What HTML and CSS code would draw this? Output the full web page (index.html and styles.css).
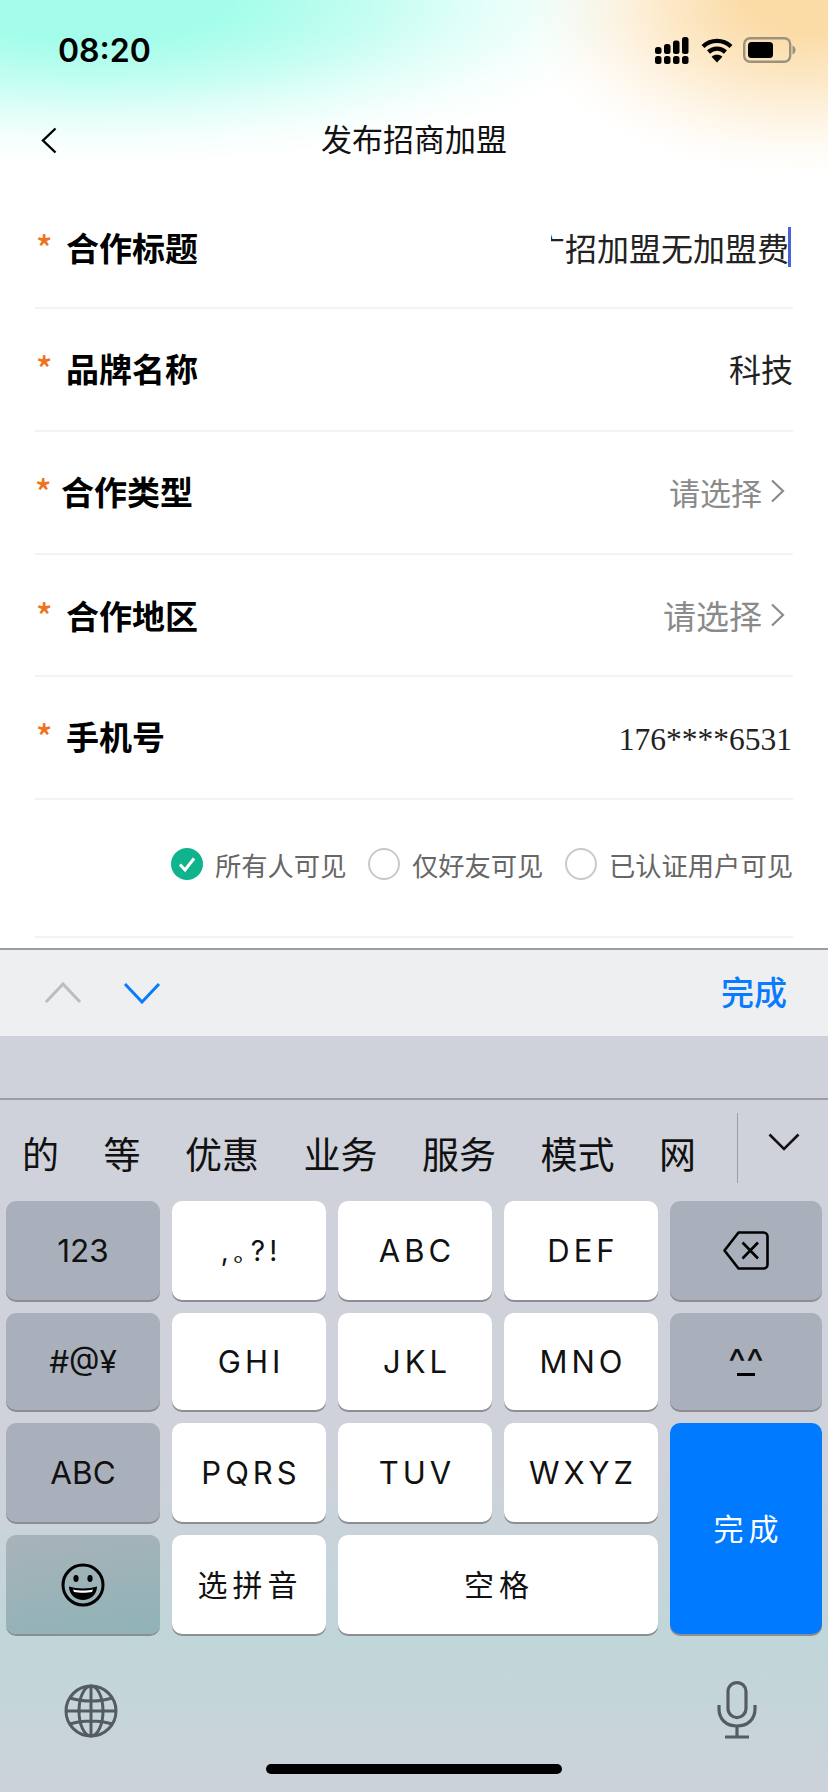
FILE: index.html
```html
<!DOCTYPE html>
<html>
<head>
    <meta charset="utf-8">
    <title>发布招商加盟</title>
    <link rel="stylesheet" href="styles.css">
</head>
<body>
    <div class="screen">
        <div class="status-bar">
            <span class="time">08:20</span>
            <div class="status-icons">
                <svg width="34" height="27" viewBox="0 0 34 27">
                    <g fill="#000">
                        <rect x="0" y="10" width="6.5" height="7" rx="2.5"/>
                        <rect x="9" y="7" width="6.5" height="10" rx="2.5"/>
                        <rect x="18" y="3.5" width="6.5" height="13.5" rx="2.5"/>
                        <rect x="27" y="0" width="6.5" height="17" rx="2.5"/>
                        <rect x="0" y="19" width="6.5" height="8" rx="2.5"/>
                        <rect x="9" y="19" width="6.5" height="8" rx="2.5"/>
                        <rect x="18" y="19" width="6.5" height="8" rx="2.5"/>
                        <rect x="27" y="19" width="6.5" height="8" rx="2.5"/>
                    </g>
                </svg>
                <svg class="wifi" width="32" height="26" viewBox="0 0 32 26">
                    <g fill="none" stroke="#000" stroke-width="4.4">
                        <path d="M2 9.5C10 2 22 2 30 9.5"/>
                        <path d="M7.5 15C12.5 10.5 19.5 10.5 24.5 15"/>
                    </g>
                    <path d="M16 25.5L10.6 19.8C13.6 17.2 18.4 17.2 21.4 19.8Z" fill="#000"/>
                </svg>
                <svg class="battery" width="53" height="26" viewBox="0 0 53 26">
                    <rect x="1.2" y="1.2" width="46" height="23.6" rx="6" fill="none" stroke="#9b917f" stroke-width="2.4"/>
                    <rect x="5" y="5" width="25" height="16" rx="3.5" fill="#000"/>
                    <path d="M49.5 8.5C51.5 9.5 52.5 11 52.5 13C52.5 15 51.5 16.5 49.5 17.5Z" fill="#9b917f"/>
                </svg>
            </div>
        </div>

        <div class="nav-bar">
            <svg class="back" width="18" height="27" viewBox="0 0 18 27">
                <path d="M15.5 1.5L3 13.5L15.5 25.5" fill="none" stroke="#000" stroke-width="2.4"/>
            </svg>
            <h1 class="nav-title">发布招商加盟</h1>
        </div>

        <form class="form">
            <div class="row row-first">
                <div class="label"><span class="star">*</span>合作标题</div>
                <div class="input-clip"><span class="value-text">广招加盟无加盟费</span><span class="cursor"></span></div>
            </div>
            <div class="row">
                <div class="label"><span class="star">*</span>品牌名称</div>
                <div class="value">科技</div>
            </div>
            <div class="row">
                <div class="label label-tight"><span class="star">*</span>合作类型</div>
                <div class="select">请选择
                    <svg width="15" height="24" viewBox="0 0 15 24"><path d="M2 1.5L13 12L2 22.5" fill="none" stroke="#8a8a8a" stroke-width="2.2"/></svg>
                </div>
            </div>
            <div class="row row-short">
                <div class="label"><span class="star">*</span>合作地区</div>
                <div class="select select-big">请选择
                    <svg width="15" height="24" viewBox="0 0 15 24"><path d="M2 1.5L13 12L2 22.5" fill="none" stroke="#8a8a8a" stroke-width="2.2"/></svg>
                </div>
            </div>
            <div class="row">
                <div class="label"><span class="star">*</span>手机号</div>
                <div class="phone">176****6531</div>
            </div>
            <div class="row row-radios">
                <div class="radio">
                    <svg width="32" height="32" viewBox="0 0 32 32">
                        <circle cx="16" cy="16" r="16" fill="#10b48c"/>
                        <path d="M9 16.5L14 22L23 10.5" fill="none" stroke="#fff" stroke-width="3"/>
                    </svg>
                    所有人可见
                </div>
                <div class="radio"><span class="circle"></span>仅好友可见</div>
                <div class="radio"><span class="circle"></span>已认证用户可见</div>
            </div>
        </form>

        <div class="toolbar">
            <svg width="38" height="22" viewBox="0 0 38 22"><path d="M2 20L19 2L36 20" fill="none" stroke="#bcbdbf" stroke-width="3"/></svg>
            <svg class="next" width="38" height="22" viewBox="0 0 38 22"><path d="M2 2L19 20L36 2" fill="none" stroke="#0a7aff" stroke-width="3"/></svg>
            <span class="done">完成</span>
        </div>

        <div class="keyboard-gap"></div>

        <div class="keyboard">
            <div class="candidates">
                <div class="candidate-list">
                    <span>的</span><span>等</span><span>优惠</span><span>业务</span><span>服务</span><span>模式</span><span>网</span>
                </div>
                <div class="candidate-more">
                    <svg width="32" height="18" viewBox="0 0 32 18"><path d="M1.5 1.5L16 16L30.5 1.5" fill="none" stroke="#111" stroke-width="2.6"/></svg>
                </div>
            </div>

            <div class="keys">
                <div class="key key-fn">123</div>
                <div class="key key-small">,｡?!</div>
                <div class="key">ABC</div>
                <div class="key">DEF</div>
                <div class="key key-fn">
                    <svg width="46" height="39" viewBox="0 0 46 39">
                        <path d="M15.5 1.5H40.5A4 4 0 0 1 44.5 5.5V33.5A4 4 0 0 1 40.5 37.5H15.5L1.5 19.5Z" fill="none" stroke="#000" stroke-width="2.6" stroke-linejoin="round"/>
                        <path d="M19.5 11.5L35 27.5M35 11.5L19.5 27.5" stroke="#000" stroke-width="2.6"/>
                    </svg>
                </div>

                <div class="key key-fn">#@¥</div>
                <div class="key">GHI</div>
                <div class="key">JKL</div>
                <div class="key">MNO</div>
                <div class="key key-fn"><span class="kaomoji">^^</span></div>

                <div class="key key-fn">ABC</div>
                <div class="key">PQRS</div>
                <div class="key">TUV</div>
                <div class="key">WXYZ</div>
                <div class="key key-done">完成</div>

                <div class="key key-fn key-emoji">
                    <svg width="44" height="44" viewBox="0 0 44 44">
                        <circle cx="22" cy="22" r="20" fill="none" stroke="#000" stroke-width="3"/>
                        <ellipse cx="15" cy="15.5" rx="2.6" ry="3.4" fill="#000"/>
                        <ellipse cx="29" cy="15.5" rx="2.6" ry="3.4" fill="#000"/>
                        <path d="M8 23.5C16 26 28 26 36 23.5C36 32 29 37 22 37C15 37 8 32 8 23.5Z" fill="#000"/>
                        <path d="M12 26.5C18 27.8 26 27.8 32 26.5L31 29C26 30 18 30 13 29Z" fill="#fff"/>
                    </svg>
                </div>
                <div class="key key-cjk">选拼音</div>
                <div class="key key-cjk key-space">空格</div>
            </div>

            <div class="keyboard-bottom">
                <svg width="54" height="54" viewBox="0 0 54 54">
                    <g fill="none" stroke="#555b63" stroke-width="3">
                        <circle cx="27" cy="27" r="25"/>
                        <ellipse cx="27" cy="27" rx="12" ry="25"/>
                        <path d="M27 2V52M2 27H52M6 14C18 18 36 18 48 14M6 40C18 36 36 36 48 40"/>
                    </g>
                </svg>
                <svg class="mic" width="40" height="58" viewBox="0 0 40 58">
                    <g fill="none" stroke="#555b63" stroke-width="3.2">
                        <rect x="11" y="1.6" width="18" height="35" rx="9"/>
                        <path d="M2 24V28C2 38 9 45 20 45C31 45 38 38 38 28V24M20 45V56M8 56H32"/>
                    </g>
                </svg>
            </div>

            <div class="home-bar"></div>
        </div>
    </div>
</body>
</html>
```

FILE: styles.css
```css
* {
    box-sizing: border-box;
}

body {
    margin: 0;
    font-family: "Noto Sans CJK SC", sans-serif;
    background-color: #fff;
}

.screen {
    width: 828px;
    height: 1792px;
    overflow: hidden;
    display: flex;
    flex-direction: column;
    background:
        radial-gradient(ellipse 560px 165px at 90px 0, #a3fdea 0, #a3fdea 25%, rgba(163, 253, 234, 0.65) 50%, rgba(163, 253, 234, 0.3) 70%, rgba(163, 253, 234, 0.1) 85%, rgba(163, 253, 234, 0) 100%),
        radial-gradient(ellipse 280px 175px at 800px 0, #fbdba6 0, #fbdba6 18%, rgba(251, 219, 166, 0.65) 45%, rgba(251, 219, 166, 0.3) 68%, rgba(251, 219, 166, 0.1) 85%, rgba(251, 219, 166, 0) 100%),
        #fff;
}

/* status bar */
.status-bar {
    height: 100px;
    flex-shrink: 0;
    display: flex;
    align-items: center;
    justify-content: space-between;
    padding: 0 32px 0 58px;
}

.time {
    font-family: Inter, sans-serif;
    font-size: 32px;
    font-weight: 600;
    color: #000;
}

.status-icons {
    display: flex;
    align-items: center;
}

.wifi {
    margin-left: 12px;
}

.battery {
    margin-left: 10px;
}

/* nav */
.nav-bar {
    height: 78px;
    flex-shrink: 0;
    display: flex;
    align-items: center;
    justify-content: center;
    padding-bottom: 4px;
    position: relative;
}

.back {
    position: absolute;
    left: 40px;
    top: 27px;
}

.nav-title {
    margin: 0;
    font-size: 31px;
    font-weight: 400;
    color: #111;
}

/* form */
.form {
    flex-shrink: 0;
    height: 770px;
    padding: 11px 35px 0 35px;
}

.row {
    height: 123px;
    display: flex;
    align-items: center;
    justify-content: space-between;
    padding-bottom: 3px;
    border-bottom: 2px solid #f3f3f3;
}

.row-first {
    height: 120px;
}

.row-short {
    height: 122px;
    padding-bottom: 1px;
}

.row-radios {
    height: 138px;
    justify-content: flex-end;
    gap: 21.5px;
}

.label {
    display: flex;
    align-items: center;
    padding-left: 1px;
    font-size: 33px;
    font-weight: 700;
    color: #000;
}

.label-tight {
    padding-left: 0;
}

.star {
    width: 30px;
    font-family: "Noto Sans CJK SC", sans-serif;
    font-size: 34px;
    font-weight: 500;
    line-height: 1;
    color: #ef7420;
}

.label-tight .star {
    width: 26px;
}

.input-clip {
    width: 240px;
    height: 42px;
    overflow: hidden;
    display: flex;
    align-items: center;
    justify-content: flex-end;
    margin-right: 2px;
}

.value-text {
    flex-shrink: 0;
    font-size: 32px;
    color: #222;
}

.cursor {
    flex-shrink: 0;
    width: 3px;
    height: 40px;
    margin-left: -1px;
    background-color: #4a64d8;
}

.value {
    font-size: 32px;
    color: #222;
}

.select {
    display: flex;
    align-items: center;
    gap: 8px;
    padding-right: 8px;
    font-size: 31px;
    color: #8a8a8a;
}

.select-big {
    font-size: 33px;
}

.phone {
    padding-top: 7px;
    padding-right: 1px;
    font-family: "Liberation Serif", serif;
    font-size: 31.5px;
    color: #222;
}

.radio {
    display: flex;
    align-items: center;
    gap: 12px;
    padding-bottom: 5px;
    font-size: 26.3px;
    color: #666;
}

.circle {
    width: 32px;
    height: 32px;
    border: 2px solid #c9c9c9;
    border-radius: 50%;
}

/* toolbar above keyboard */
.toolbar {
    height: 88px;
    flex-shrink: 0;
    display: flex;
    align-items: center;
    padding: 0 41px 0 44px;
    background-color: #eeeff1;
    border-top: 2px solid #9c9da0;
}

.next {
    margin-left: 41px;
}

.done {
    margin-left: auto;
    padding-bottom: 4px;
    font-size: 33px;
    font-weight: 500;
    color: #0a7aff;
}

.keyboard-gap {
    height: 64px;
    flex-shrink: 0;
    background-color: #cfd2da;
    border-bottom: 2px solid #9b9da3;
}

/* keyboard */
.keyboard {
    flex: 1;
    background: linear-gradient(180deg, #cfd2da 0, #cfd2da 52%, #c0d6d9 78%, #c5d5da 88%, #cdd2da 100%);
}

.candidates {
    height: 101px;
    display: flex;
    align-items: center;
    justify-content: space-between;
}

.candidate-list {
    display: flex;
    gap: 44.5px;
    padding-left: 22px;
    padding-top: 4px;
    font-size: 37px;
    color: #111;
}

.candidate-more {
    width: 91px;
    height: 70px;
    margin-top: -6px;
    padding: 20px 0 0 30px;
    border-left: 1px solid #9a9ca2;
}

.candidate-more svg {
    display: block;
}

.keys {
    display: grid;
    grid-template-columns: 154px 154px 154px 154px 152px;
    grid-template-rows: 99px 97px 99px 99px;
    gap: 13px 12px;
    padding: 0 6px;
}

.key {
    display: flex;
    align-items: center;
    justify-content: center;
    padding-left: 4px;
    border-radius: 10px;
    background-color: #fff;
    box-shadow: 0 2px 0 #8d8e93;
    font-family: Inter, sans-serif;
    font-size: 31px;
    letter-spacing: 4px;
    color: #111;
}

.key-fn {
    padding-left: 0;
    background-color: #aab0bb;
    font-size: 31.5px;
    letter-spacing: 0;
}

.key-small {
    font-size: 28px;
}

.key-emoji {
    background: linear-gradient(170deg, #a8b3ba 0, #8fb3b6 100%);
}

.key-cjk {
    padding-left: 2px;
    padding-bottom: 4px;
    font-family: "Noto Sans CJK SC", sans-serif;
    font-size: 30px;
    letter-spacing: 5px;
}

.key-space {
    grid-column: span 2;
}

.key-done {
    grid-row: span 2;
    padding-left: 5px;
    padding-bottom: 4px;
    background-color: #007aff;
    font-family: "Noto Sans CJK SC", sans-serif;
    font-size: 30px;
    letter-spacing: 5px;
    color: #fff;
}

.kaomoji {
    position: relative;
    font-size: 38px;
}

.kaomoji::after {
    content: "";
    position: absolute;
    left: 50%;
    bottom: 9px;
    width: 18px;
    height: 3px;
    margin-left: -9px;
    background-color: #000;
}

.keyboard-bottom {
    display: flex;
    align-items: flex-start;
    justify-content: space-between;
    padding: 50px 71px 0 64px;
}

.mic {
    margin-top: -3px;
}

.home-bar {
    width: 296px;
    height: 10px;
    margin: 25px auto 0;
    border-radius: 5px;
    background-color: #000;
}
```
